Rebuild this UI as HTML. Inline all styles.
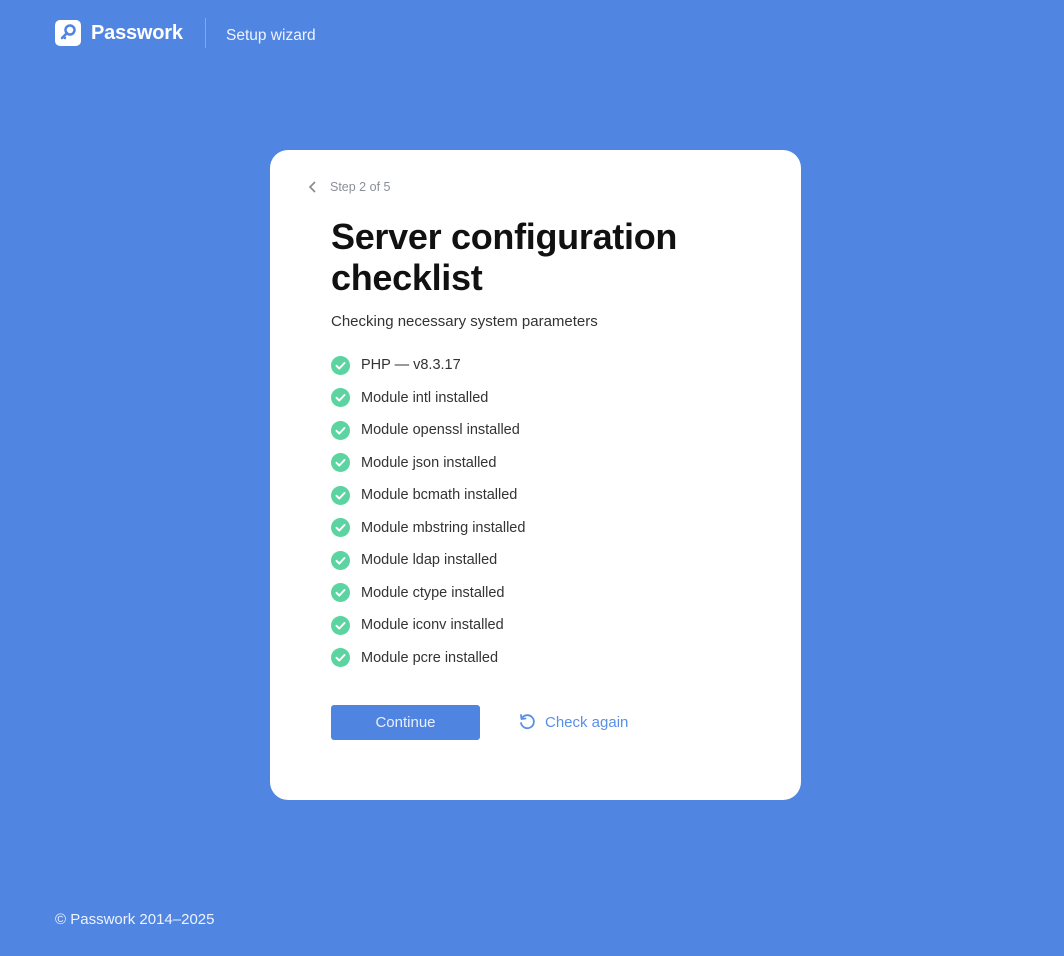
<!DOCTYPE html>
<html><head><meta charset="utf-8"><style>
*{margin:0;padding:0;box-sizing:border-box}
body{width:1064px;height:956px;background:#5085e1;font-family:"Liberation Sans",sans-serif;position:relative;overflow:hidden}
.logo{position:absolute;left:55px;top:20px;width:26px;height:26px;background:#fff;border-radius:5px}
.brand{position:absolute;left:91px;top:22px;color:#fff;font-size:20px;font-weight:bold;letter-spacing:-0.2px}
.sep{position:absolute;left:205px;top:18px;width:1px;height:30px;background:rgba(255,255,255,.3)}
.wiz{position:absolute;left:226px;top:27px;color:#eef3ff;font-size:15.5px}
.card{position:absolute;left:270px;top:150px;width:531px;height:650px;background:#fff;border-radius:18px}
.step{position:absolute;left:60px;top:30px;font-size:12.5px;color:#8a8f99}
.back{position:absolute;left:38px;top:30px}
h1{position:absolute;left:61px;top:66px;font-size:36px;line-height:41px;color:#111;font-weight:bold;letter-spacing:-0.3px}
.sub{position:absolute;left:61px;top:163px;font-size:15px;color:#333}
ul{position:absolute;left:61px;top:199px;list-style:none}
li{height:32.5px;display:flex;align-items:center;font-size:14.5px;color:#333}
li svg{margin-right:11px}
.btn{position:absolute;left:61px;top:555px;width:149px;height:35px;background:#4f85e0;border-radius:3px;color:#e8efff;font-size:15px;text-align:center;line-height:36px}
.again{position:absolute;left:248px;top:563px;color:#5a8fe6;font-size:15px;display:flex;align-items:center}
.again svg{margin-right:9px}
.foot{position:absolute;left:55px;top:911px;color:#eef3ff;font-size:15px}
</style></head><body>
<div class="logo"><svg width="26" height="26" viewBox="0 0 26 26"><circle cx="15" cy="10" r="4.5" fill="none" stroke="#5085e1" stroke-width="2.5"/><path d="M12 13 L7 18 M8.5 16.5 L10 18" stroke="#5085e1" stroke-width="2.5" stroke-linecap="round"/></svg></div>
<div class="brand">Passwork</div>
<div class="sep"></div>
<div class="wiz">Setup wizard</div>
<div class="card">
<svg class="back" width="10" height="14" viewBox="0 0 10 14"><path d="M7 2 L2 7 L7 12" fill="none" stroke="#888" stroke-width="1.6"/></svg>
<div class="step">Step 2 of 5</div>
<h1>Server configuration<br>checklist</h1>
<div class="sub">Checking necessary system parameters</div>
<ul>
<li><svg width="19" height="19" viewBox="0 0 19 19"><circle cx="9.5" cy="9.5" r="9.5" fill="#5bd4a1"/><path d="M5.5 9.8 L8.3 12.5 L13.5 7" fill="none" stroke="#fff" stroke-width="2" stroke-linecap="round" stroke-linejoin="round"/></svg>PHP — v8.3.17</li>
<li><svg width="19" height="19" viewBox="0 0 19 19"><circle cx="9.5" cy="9.5" r="9.5" fill="#5bd4a1"/><path d="M5.5 9.8 L8.3 12.5 L13.5 7" fill="none" stroke="#fff" stroke-width="2" stroke-linecap="round" stroke-linejoin="round"/></svg>Module intl installed</li>
<li><svg width="19" height="19" viewBox="0 0 19 19"><circle cx="9.5" cy="9.5" r="9.5" fill="#5bd4a1"/><path d="M5.5 9.8 L8.3 12.5 L13.5 7" fill="none" stroke="#fff" stroke-width="2" stroke-linecap="round" stroke-linejoin="round"/></svg>Module openssl installed</li>
<li><svg width="19" height="19" viewBox="0 0 19 19"><circle cx="9.5" cy="9.5" r="9.5" fill="#5bd4a1"/><path d="M5.5 9.8 L8.3 12.5 L13.5 7" fill="none" stroke="#fff" stroke-width="2" stroke-linecap="round" stroke-linejoin="round"/></svg>Module json installed</li>
<li><svg width="19" height="19" viewBox="0 0 19 19"><circle cx="9.5" cy="9.5" r="9.5" fill="#5bd4a1"/><path d="M5.5 9.8 L8.3 12.5 L13.5 7" fill="none" stroke="#fff" stroke-width="2" stroke-linecap="round" stroke-linejoin="round"/></svg>Module bcmath installed</li>
<li><svg width="19" height="19" viewBox="0 0 19 19"><circle cx="9.5" cy="9.5" r="9.5" fill="#5bd4a1"/><path d="M5.5 9.8 L8.3 12.5 L13.5 7" fill="none" stroke="#fff" stroke-width="2" stroke-linecap="round" stroke-linejoin="round"/></svg>Module mbstring installed</li>
<li><svg width="19" height="19" viewBox="0 0 19 19"><circle cx="9.5" cy="9.5" r="9.5" fill="#5bd4a1"/><path d="M5.5 9.8 L8.3 12.5 L13.5 7" fill="none" stroke="#fff" stroke-width="2" stroke-linecap="round" stroke-linejoin="round"/></svg>Module ldap installed</li>
<li><svg width="19" height="19" viewBox="0 0 19 19"><circle cx="9.5" cy="9.5" r="9.5" fill="#5bd4a1"/><path d="M5.5 9.8 L8.3 12.5 L13.5 7" fill="none" stroke="#fff" stroke-width="2" stroke-linecap="round" stroke-linejoin="round"/></svg>Module ctype installed</li>
<li><svg width="19" height="19" viewBox="0 0 19 19"><circle cx="9.5" cy="9.5" r="9.5" fill="#5bd4a1"/><path d="M5.5 9.8 L8.3 12.5 L13.5 7" fill="none" stroke="#fff" stroke-width="2" stroke-linecap="round" stroke-linejoin="round"/></svg>Module iconv installed</li>
<li><svg width="19" height="19" viewBox="0 0 19 19"><circle cx="9.5" cy="9.5" r="9.5" fill="#5bd4a1"/><path d="M5.5 9.8 L8.3 12.5 L13.5 7" fill="none" stroke="#fff" stroke-width="2" stroke-linecap="round" stroke-linejoin="round"/></svg>Module pcre installed</li>
</ul>
<div class="btn">Continue</div>
<div class="again"><svg width="18" height="18" viewBox="0 0 18 18"><path d="M4 5 A6.5 6.5 0 1 1 3 10" fill="none" stroke="#5a8fe6" stroke-width="1.8" stroke-linecap="round"/><path d="M3 2 L3.5 6 L7.5 5.5" fill="none" stroke="#5a8fe6" stroke-width="1.8" stroke-linecap="round" stroke-linejoin="round"/></svg>Check again</div>
</div>
<div class="foot">© Passwork 2014–2025</div>
</body></html>
